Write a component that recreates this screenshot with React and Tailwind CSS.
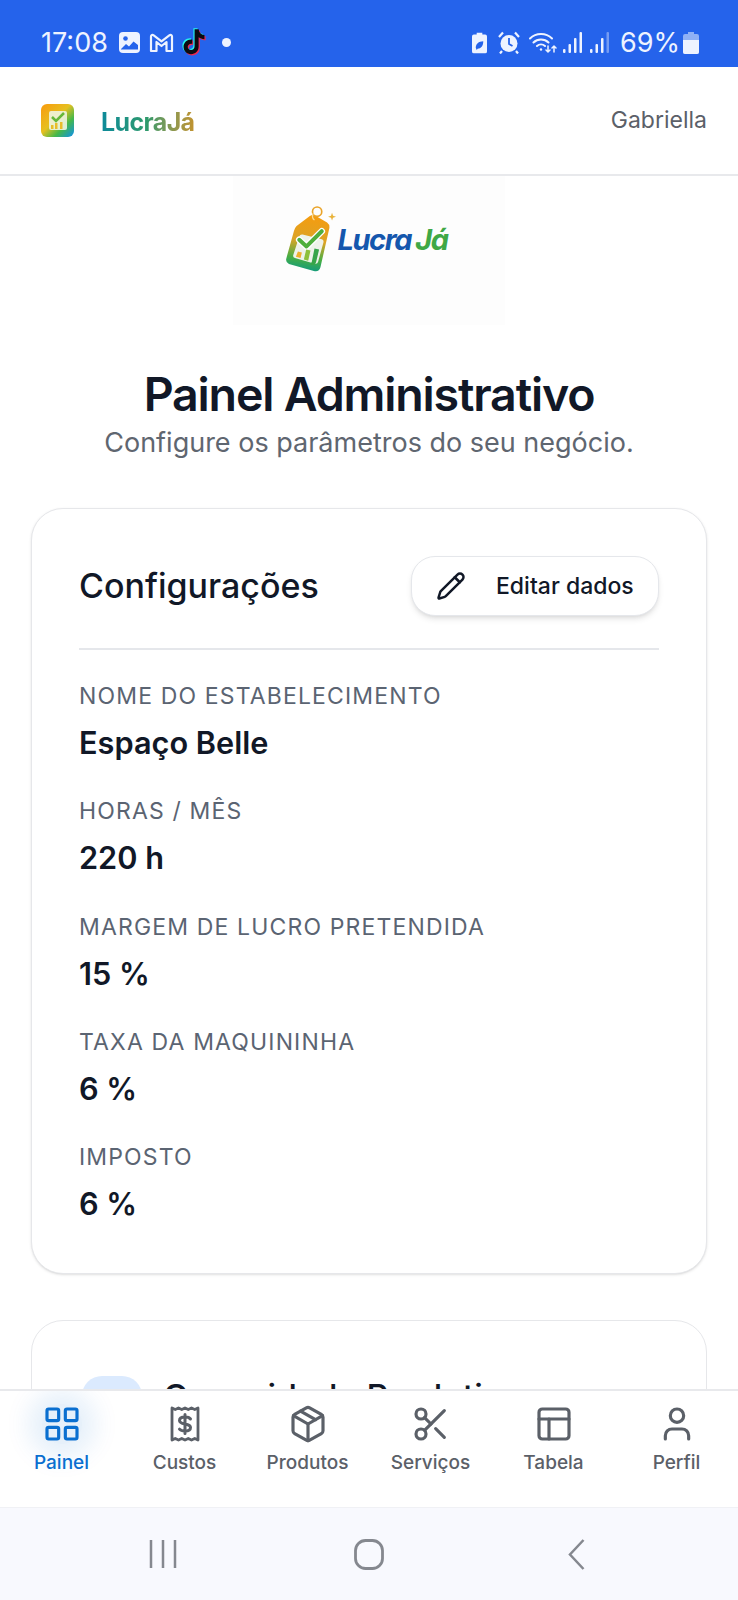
import React from "react";
import { LayoutGrid, Package, Scissors, PanelsTopLeft, User, Pencil } from "lucide-react";

const FONT = "font-['Inter','Noto_Sans',sans-serif]";

const fields = [
  { label: "NOME DO ESTABELECIMENTO", value: "Espaço Belle" },
  { label: "HORAS / MÊS", value: "220 h" },
  { label: "MARGEM DE LUCRO PRETENDIDA", value: "15 %" },
  { label: "TAXA DA MAQUININHA", value: "6 %" },
  { label: "IMPOSTO", value: "6 %" },
];

const ReceiptIcon = ({ className }) => (
  <svg className={className} viewBox="-4 -2 40 40" fill="none" stroke="currentColor" strokeWidth="2.800" strokeLinejoin="round" strokeLinecap="round">
    <path d="M3 2l3.250 1.500L9.500 2l3.250 1.500L16 2l3.250 1.500L22.500 2l3.250 1.500L29 2v32l-3.250-1.500L22.500 34l-3.250-1.500L16 34l-3.250-1.500L9.500 34l-3.250-1.500L3 34z" />
    <path d="M21.500 13c-1-1.300-2.800-1.900-5.500-1.900-3 0-5.500 1-5.500 3.500 0 5 11 2 11 7 0 2.500-2.500 3.500-5.500 3.500-2.700 0-4.500-.6-5.500-1.900M16 8.500v19" strokeWidth="3" />
  </svg>
);

const tabs = [
  { label: "Painel", Icon: LayoutGrid, active: true },
  { label: "Custos", Icon: ReceiptIcon },
  { label: "Produtos", Icon: Package },
  { label: "Serviços", Icon: Scissors },
  { label: "Tabela", Icon: PanelsTopLeft },
  { label: "Perfil", Icon: User },
];

const TIKTOK_PATH = "M13 2h3.500c.3 3 2 4.800 5 5v3.500c-2 0-3.600-.6-5-1.600v8c0 4-3 6.600-6.500 6.600-3.800 0-6.500-2.800-6.500-6.400 0-4 3.400-6.800 7.500-6.300v3.700c-2-.6-3.900.7-3.900 2.600 0 1.700 1.300 2.800 2.900 2.800 1.800 0 3-1.200 3-3.200z";

const StatusIcons = {
  Image: () => (
    <svg width="21" height="21" viewBox="0 0 21 21">
      <rect width="21" height="21" rx="4" fill="#eef3ff" />
      <circle cx="6.500" cy="6.500" r="2.300" fill="#2563eb" />
      <path d="M2 17l5-5 3 2.500 4.500-5L19 13v4.500H2z" fill="#2563eb" />
    </svg>
  ),
  Mail: () => (
    <svg width="25" height="20" viewBox="0 0 25 20" fill="none" stroke="#eef3ff" strokeWidth="2.200" strokeLinejoin="round">
      <path d="M2 18V3.500c0-1.500 1.500-2 2.700-1.200l7.800 6 7.800-6c1.200-.8 2.700-.3 2.700 1.200V18h-5.500V9l-5 4-5-4v9z" />
    </svg>
  ),
  TikTok: () => (
    <svg width="26" height="29" viewBox="1.500 0 22 25">
      <path d={TIKTOK_PATH} fill="#ef2950" transform="translate(1 1)" />
      <path d={TIKTOK_PATH} fill="#25f4ee" transform="translate(-1 -1)" />
      <path d={TIKTOK_PATH} fill="#0b0b12" />
    </svg>
  ),
  BatterySaver: () => (
    <svg width="15" height="22" viewBox="0 0 16 22">
      <path d="M5 0h6v2h3a2 2 0 0 1 2 2v16a2 2 0 0 1-2 2H2a2 2 0 0 1-2-2V4a2 2 0 0 1 2-2h3z" fill="#eef3ff" />
      <path d="M4 16c0-4 3-7 8-7 0 5-2.500 8-6 8l-1 1.500z" fill="#2563eb" />
    </svg>
  ),
  Alarm: () => (
    <svg width="22" height="23" viewBox="0 0 22 23">
      <circle cx="11" cy="12.500" r="8.500" fill="#eef3ff" />
      <path d="M11 7v6l3.500 2" stroke="#2563eb" strokeWidth="1.800" fill="none" />
      <path d="M1 6l4-4.500M21 6l-4-4.500M4 20l-2 2.500M18 20l2 2.500" stroke="#eef3ff" strokeWidth="2.200" />
    </svg>
  ),
  Wifi: () => (
    <svg width="28" height="23" viewBox="0 0 28 23" fill="none" stroke="#eef3ff" strokeWidth="2" strokeLinecap="round">
      <path d="M1 7.500c6-6 16-6 22 0M4.500 11.500c4-4 11-4 15 0M8 15c2.300-2 5.700-2 8 0" />
      <circle cx="12" cy="18.500" r="1.200" fill="#eef3ff" stroke="none" />
      <path d="M19 15v6M17 19l2 2 2-2M25 21v-6M23 17l2-2 2 2" strokeWidth="1.500" />
    </svg>
  ),
  Signal: ({ dim }) => (
    <svg width="20" height="21" viewBox="0 0 20 21" fill="#eef3ff">
      <rect x="0" y="17" width="2.500" height="4" rx="1" />
      <rect x="5.500" y="12" width="2.500" height="9" rx="1" />
      <rect x="11" y="6" width="2.500" height="15" rx="1" />
      <rect x="16.500" y="0" width="2.500" height="21" rx="1" opacity={dim ? 0.4 : 1} />
    </svg>
  ),
  Battery: () => (
    <svg width="16" height="22" viewBox="0 0 16 22">
      <path d="M5 0h6v2h3a2 2 0 0 1 2 2v16a2 2 0 0 1-2 2H2a2 2 0 0 1-2-2V4a2 2 0 0 1 2-2h3z" fill="#8fb0f5" />
      <path d="M0 8h16v12a2 2 0 0 1-2 2H2a2 2 0 0 1-2-2z" fill="#eef3ff" />
    </svg>
  ),
};

const TagLogo = () => (
  <svg className="h-[68px] w-[53px]" viewBox="40 30 160 205">
    <defs>
      <linearGradient id="tag-fill" x1="0.500" y1="0" x2="0.400" y2="1">
        <stop offset="0" stopColor="#f59c0f" />
        <stop offset="0.450" stopColor="#dca326" />
        <stop offset="0.780" stopColor="#45ae45" />
        <stop offset="1" stopColor="#0f9a80" />
      </linearGradient>
    </defs>
    <path d="M78 90L118 60q8-5 17-1l35 21q8 6 7 16L150 215q-4 15-20 11L55 205q-11-5-8-17L70 105q2-9 8-15z" fill="url(#tag-fill)" />
    <path d="M86 122q2-7 10-6l58 14q7 2 5 10l-16 58q-2 8-10 6l-60-17q-7-2-5-9z" fill="#eef2ea" />
    <path d="M86 132l22 20 46-46" fill="none" stroke="#ffffff" strokeWidth="20" strokeLinecap="round" strokeLinejoin="round" />
    <path d="M86 132l22 20 46-46" fill="none" stroke="#4fae3c" strokeWidth="12" strokeLinecap="round" strokeLinejoin="round" />
    <path d="M76 183l6-16 12 3-4 17z" fill="#efb02c" />
    <path d="M100 191l7-30 13 3-7 31z" fill="#8dc03a" />
    <path d="M124 198l8-40 14 3-9 38q-3 12-18 8z" fill="#37a549" />
    <circle cx="140" cy="47" r="14" fill="none" stroke="#eaa42a" strokeWidth="5" />
    <path d="M128 52q-6 14 4 20" fill="none" stroke="#f8dc9c" strokeWidth="4" />
    <path d="M185 50l3 9 9 3-9 3-3 9-3-9-9-3 9-3z" fill="#e9b33a" />
  </svg>
);

const SmallLogo = () => (
  <svg className="h-[33px] w-[33px]" viewBox="0 0 33 33">
    <defs>
      <linearGradient id="small-logo" x1="0" y1="0" x2="1" y2="1">
        <stop offset="0" stopColor="#f99a0e" />
        <stop offset="0.450" stopColor="#e6c020" />
        <stop offset="0.700" stopColor="#45b84a" />
        <stop offset="1" stopColor="#0c8ff0" />
      </linearGradient>
    </defs>
    <rect width="33" height="33" rx="6" fill="url(#small-logo)" />
    <rect x="8" y="7" width="18" height="19" rx="2" fill="#eef5e0" opacity="0.900" />
    <path d="M11 13l4 4 8-8" fill="none" stroke="#66b83a" strokeWidth="2.500" />
    <path d="M10 25v-4h2.500v4zM14 25v-6h2.500v6zM19 25v-7h2.500v7z" fill="#e8bd2a" />
  </svg>
);

const App = () => {
  return (
    <div className={`flex h-[1600px] w-[738px] flex-col overflow-hidden bg-white ${FONT}`}>
      <div className="flex h-[67px] shrink-0 items-center justify-between bg-[#2563eb] pl-[41px] pr-[39px] pt-[18px] text-[#eef3ff]">
        <div className="flex items-center">
          <span className="text-[27px] leading-none">17:08</span>
          <span className="ml-[11px]"><StatusIcons.Image /></span>
          <span className="ml-[9px]"><StatusIcons.Mail /></span>
          <span className="ml-[7px] mb-[3px]"><StatusIcons.TikTok /></span>
          <span className="ml-[15px] h-[9px] w-[9px] rounded-full bg-[#eef3ff]" />
        </div>
        <div className="flex items-center">
          <StatusIcons.BatterySaver />
          <span className="ml-[11px]"><StatusIcons.Alarm /></span>
          <span className="ml-[9px]"><StatusIcons.Wifi /></span>
          <span className="ml-[6px]"><StatusIcons.Signal /></span>
          <span className="ml-[7px]"><StatusIcons.Signal dim /></span>
          <span className="ml-[10px] text-[27px] leading-none">69%</span>
          <span className="ml-[3px]"><StatusIcons.Battery /></span>
        </div>
      </div>

      <header className="flex h-[109px] shrink-0 items-center justify-between border-b-2 border-[#e8e9ec] pl-[41px] pr-[31px]">
        <div className="flex items-center gap-[27px]">
          <SmallLogo />
          <span className="bg-gradient-to-r from-[#0b8a9a] via-[#2f9a6a] to-[#c2922c] bg-clip-text pt-[4px] text-[25px] font-bold tracking-tight text-transparent">
            LucraJá
          </span>
        </div>
        <span className="text-[23px] text-[#5b6068]">Gabriella</span>
      </header>

      <main className="flex min-h-0 flex-1 flex-col overflow-hidden px-[31px]">
        <div className="mx-auto flex h-[149px] w-[272px] shrink-0 items-center justify-center bg-[#fdfdfd] pb-[22px] pr-[6px]">
          <TagLogo />
          <span className="flex items-baseline text-[29px] font-bold italic leading-none tracking-tighter">
            <span className="text-[#1557ad]">Lucra</span>
            <span className="ml-[4px] text-[#3fa845]">Já</span>
          </span>
        </div>

        <h1 className="mt-[39px] text-center text-[46.500px] font-semibold leading-[60px] tracking-tight text-[#111827]">
          Painel Administrativo
        </h1>
        <p className="text-center text-[27px] leading-[38px] text-[#5f6670]">
          Configure os parâmetros do seu negócio.
        </p>

        <section className="mt-[46px] h-[766px] shrink-0 rounded-[32px] border border-[#e6e7ea] bg-white px-[47px] pt-[47px] shadow-sm">
          <div className="flex h-[94px] items-start justify-between border-b-2 border-[#e5e7eb]">
            <h2 className="mt-[7px] text-[34px] font-medium leading-[46px] text-[#111827]">Configurações</h2>
            <button className="flex h-[60px] w-[248px] items-center gap-[30px] rounded-[24px] border border-[#e5e7eb] bg-white pl-[24px] text-[23px] font-medium text-[#111827] shadow-md">
              <Pencil className="h-[30px] w-[30px]" strokeWidth={2} />
              Editar dados
            </button>
          </div>
          <dl className="mt-[30px] flex flex-col gap-[23.250px]">
            {fields.map((field) => (
              <div key={field.label} className="flex h-[92px] flex-col">
                <dt className="text-[23px] leading-[32px] tracking-[0.05em] text-[#5b6472]">{field.label}</dt>
                <dd className="mt-[11px] text-[30.700px] font-semibold leading-[40px] text-[#111827]">{field.value}</dd>
              </div>
            ))}
          </dl>
        </section>

        <section className="mt-[46px] flex h-[200px] shrink-0 items-start gap-[21px] rounded-[32px] border border-[#e6e7ea] bg-white pl-[50px] pt-[55px]">
          <div className="h-[60px] w-[60px] rounded-[20px] bg-[#dbeafe]" />
          <h2 className="mt-[-2px] text-[34px] font-medium leading-[46px] text-[#111827]">Capacidade Produtiva</h2>
        </section>
      </main>

      <nav className="grid h-[118px] shrink-0 grid-cols-6 overflow-hidden border-t-2 border-[#e8e9ec] bg-white pt-[13px]">
        {tabs.map(({ label, Icon, active }) => (
          <div key={label} className={`flex flex-col items-center ${active ? "text-[#0a6fd0]" : "text-[#5b6068]"}`}>
            <span className={`flex h-[40px] w-[40px] items-center justify-center rounded-full ${active ? "bg-[#0a6fd0]/10 shadow-[0_0_24px_14px_rgba(10,111,208,0.1)]" : ""}`}>
              <Icon className="h-[40px] w-[40px]" strokeWidth={1.900} />
            </span>
            <span className="mt-[6px] text-[19px] font-medium leading-[26px]">{label}</span>
          </div>
        ))}
      </nav>

      <div className="flex h-[93px] shrink-0 items-center justify-between border-t border-[#f0f1f5] bg-[#f8f9fe] pl-[149px] pr-[153px]">
        <svg width="28" height="30" viewBox="0 0 28 30" stroke="#85888f" strokeWidth="2.500">
          <path d="M2 1v28M14 1v28M26 1v28" />
        </svg>
        <svg className="mr-[7px]" width="30" height="31" viewBox="0 0 30 31" fill="none" stroke="#85888f" strokeWidth="2.800">
          <rect x="1.500" y="1.500" width="27" height="28" rx="10" />
        </svg>
        <svg width="17" height="31" viewBox="0 0 17 31" fill="none" stroke="#85888f" strokeWidth="2.500">
          <path d="M15.500 1L2 15.500 15.500 30" />
        </svg>
      </div>
    </div>
  );
};

export default App;
